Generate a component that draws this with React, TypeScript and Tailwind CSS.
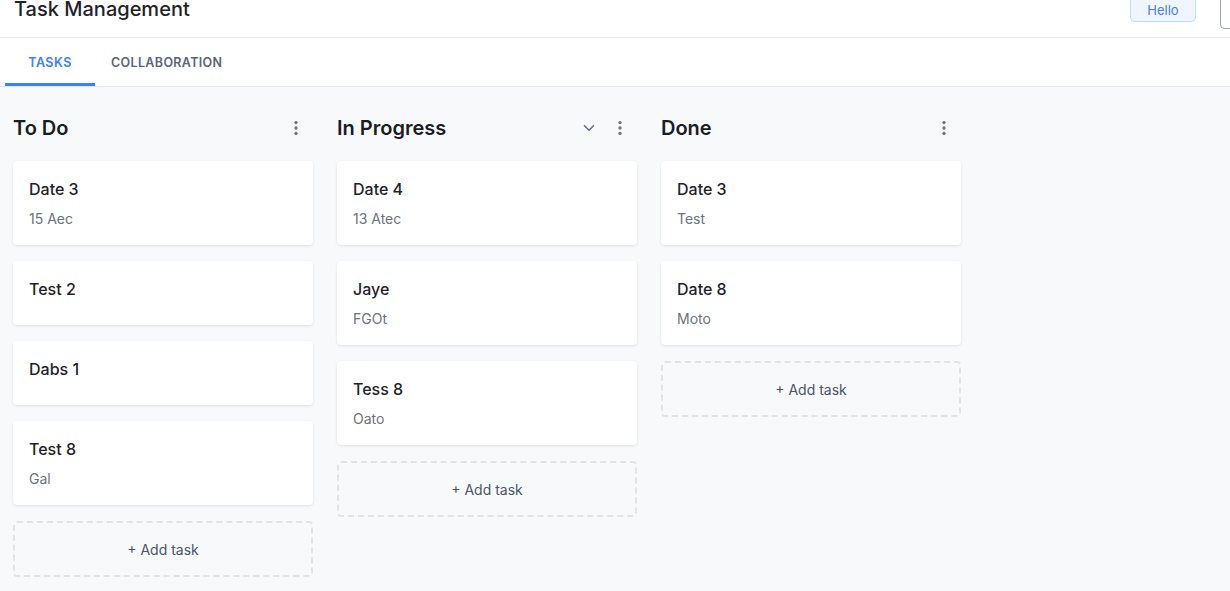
import React from "react";

type Task = { title: string; sub?: string };
type Column = { name: string; chevron?: boolean; tasks: Task[] };

const columns: Column[] = [
  {
    name: "To Do",
    tasks: [
      { title: "Date 3", sub: "15 Aec" },
      { title: "Test 2" },
      { title: "Dabs 1" },
      { title: "Test 8", sub: "Gal" },
    ],
  },
  {
    name: "In Progress",
    chevron: true,
    tasks: [
      { title: "Date 4", sub: "13 Atec" },
      { title: "Jaye", sub: "FGOt" },
      { title: "Tess 8", sub: "Oato" },
    ],
  },
  {
    name: "Done",
    tasks: [
      { title: "Date 3", sub: "Test" },
      { title: "Date 8", sub: "Moto" },
    ],
  },
];

const Kebab = () => (
  <svg width="20" height="20" viewBox="0 0 24 24" fill="#6b7280">
    <circle cx="12" cy="5.5" r="2" />
    <circle cx="12" cy="12" r="2" />
    <circle cx="12" cy="18.5" r="2" />
  </svg>
);

const Chevron = () => (
  <svg width="18" height="18" viewBox="0 0 24 24" fill="none" stroke="#64748b" strokeWidth="2.2" strokeLinecap="round" strokeLinejoin="round">
    <path d="M6 9l6 6 6-6" />
  </svg>
);

export default function App() {
  return (
    <div className="h-[591px] overflow-hidden bg-[#f8f9fb] text-[#1a1d23] font-['Inter',sans-serif]">
      {/* Top bar */}
      <header className="h-[38px] bg-white border-b border-[#e5e7eb] flex items-start justify-between pl-[14px] overflow-hidden">
        <h1 className="text-[20px] leading-[28px] font-medium text-[#1f2329] -mt-[5px]">Task Management</h1>
        <div className="flex items-start gap-6">
          <button className="-mt-[8px] h-[30px] w-[66px] rounded-[5px] border border-[#bfdbfe] bg-[#eff6ff] text-[13px] text-[#4a7bf0] pt-[7px]">
            Hello
          </button>
          <div className="-mt-[8px] h-[37px] w-[10px] rounded-bl-[5px] border-l border-b border-[#9ca3af] bg-white" />
        </div>
      </header>

      {/* Tabs */}
      <nav className="h-[49px] bg-white border-b border-[#e2e5ea] flex pl-[5px]">
        <div className="w-[90px] flex flex-col">
          <span className="flex-1 flex items-center justify-center pt-[5px] text-[12.5px] font-semibold tracking-[0.5px] text-[#3b82f6]">TASKS</span>
          <span className="h-[3px] bg-[#3b82f6]" />
        </div>
        <div className="px-4 flex items-center pt-[3px] text-[12.5px] font-semibold tracking-[0.35px] text-[#5b6577]">
          COLLABORATION
        </div>
      </nav>

      {/* Board */}
      <main className="flex gap-6 pl-[13px] pt-4">
        {columns.map((col) => (
          <section key={col.name} className="w-[300px] flex flex-col">
            <div className="h-[50px] mb-2 flex items-center justify-between pr-[7px]">
              <h2 className="text-[20px] font-semibold text-[#1a1d23]">{col.name}</h2>
              <div className="flex items-center gap-[12px]">
                {col.chevron && <Chevron />}
                <Kebab />
              </div>
            </div>
            <div className="flex flex-col gap-4">
              {col.tasks.map((t, i) => (
                <div key={i} className="bg-white rounded-[4px] shadow-[0_1px_3px_rgba(0,0,0,0.1)] px-4 pt-4 pb-4">
                  <div className="text-[16px] leading-6 font-medium text-[#1f2329] mb-2">{t.title}</div>
                  {t.sub && <div className="text-[14px] leading-5 text-[#6b7280]">{t.sub}</div>}
                </div>
              ))}
              <button className="h-[56px] rounded-[4px] border-2 border-dashed border-[#dfe3ea] text-[14px] text-[#4b5563] flex items-center justify-center">
                + Add task
              </button>
            </div>
          </section>
        ))}
      </main>
    </div>
  );
}
